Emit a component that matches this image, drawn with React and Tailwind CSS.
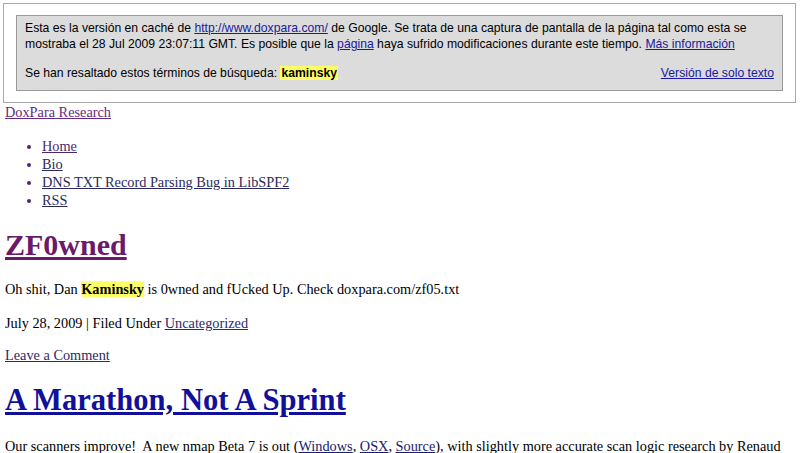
export default function App() {
  return (
    <div className="min-h-screen bg-white text-black font-['Liberation_Serif',serif] overflow-hidden">
      {/* cache banner */}
      <div className="ml-[3px] mr-[4px] mt-[3px] border border-[#a8a8a8] bg-white px-[12px] py-[11px]">
        <div className="border border-[#9a9a9a] bg-[#dcdcdc] px-[8px] pt-[4px] pb-[9px] text-[12.2px] leading-[16px] font-['Liberation_Sans',Arial,sans-serif]">
          <p className="whitespace-nowrap">
            Esta es la versión en caché de{" "}
            <a href="#" className="text-[#1a1a9a] underline">http://www.doxpara.com/</a>{" "}
            de Google. Se trata de una captura de pantalla de la página tal como esta se
            <br />
            mostraba el 28 Jul 2009 23:07:11 GMT. Es posible que la{" "}
            <a href="#" className="text-[#1a1a9a] underline">página</a> haya sufrido modificaciones durante
            este tiempo. <a href="#" className="text-[#1a1a9a] underline">Más información</a>
          </p>
          <div className="mt-[13px] flex items-end justify-between">
            <span>
              Se han resaltado estos términos de búsqueda:{" "}
              <b className="bg-[#ffff66] px-[1px]">kaminsky</b>
            </span>
            <a href="#" className="text-[#1a1a9a] underline">Versión de solo texto</a>
          </div>
        </div>
      </div>

      {/* page */}
      <div className="px-[5px] text-[14.3px] leading-[18px]">
        <a href="#" className="text-[#6a2a7a] underline">DoxPara Research</a>

        <ul className="mt-[16px] list-disc pl-[37px] text-[#4a2a6a]">
          <li><a href="#" className="underline">Home</a></li>
          <li><a href="#" className="underline text-[#2a2a5a]">Bio</a></li>
          <li><a href="#" className="underline text-[#2a2a5a]">DNS TXT Record Parsing Bug in LibSPF2</a></li>
          <li><a href="#" className="underline text-[#2a2a5a]">RSS</a></li>
        </ul>

        <h2 className="mt-[18px] text-[30px] leading-[36px] font-bold">
          <a href="#" className="text-[#6a1a6a] underline">ZF0wned</a>
        </h2>
        <p className="mt-[17px]">
          Oh shit, Dan <b className="bg-[#ffff66]">Kaminsky</b> is 0wned and fUcked Up. Check doxpara.com/zf05.txt
        </p>
        <p className="mt-[16px]">
          July 28, 2009 | Filed Under <a href="#" className="text-[#2a2a6a] underline">Uncategorized</a>
        </p>
        <p className="mt-[14px]">
          <a href="#" className="text-[#2a2a6a] underline">Leave a Comment</a>
        </p>

        <h2 className="mt-[18px] text-[30.6px] leading-[36px] font-bold">
          <a href="#" className="text-[#10109a] underline">A Marathon, Not A Sprint</a>
        </h2>
        <p className="mt-[19px] whitespace-nowrap">
          Our scanners improve!&nbsp; A new nmap Beta 7 is out (
          <a href="#" className="text-[#1a1a6a] underline">Windows</a>,{" "}
          <a href="#" className="text-[#1a1a6a] underline">OSX</a>,{" "}
          <a href="#" className="text-[#1a1a6a] underline">Source</a>), with slightly more accurate scan logic
          research by Renaud
        </p>
      </div>
    </div>
  );
}
